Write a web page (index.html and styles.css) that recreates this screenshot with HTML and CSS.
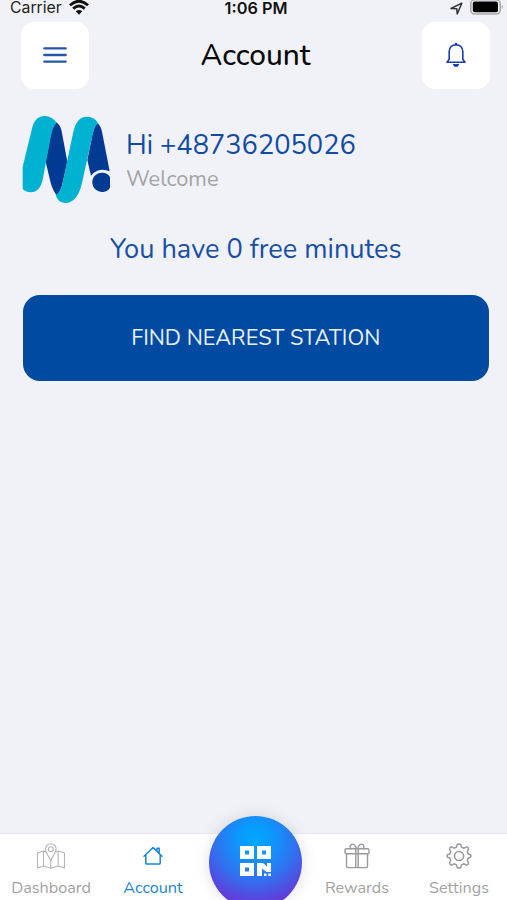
FILE: index.html
```
<!DOCTYPE html>
<html lang="en">
<head>
    <title>Account</title>
    <meta charset="UTF-8">
    <meta name="viewport" content="width=device-width, initial-scale=1.0">
    <link rel="stylesheet" href="styles.css">
</head>
<body>
    <div class="status-bar">
        <div class="carrier">
            <span>Carrier</span>
            <svg width="20" height="15" viewBox="0 0 20 15" fill="none" stroke="#111" stroke-width="2.8">
                <path d="M1 5.2Q10-2.8 19 5.2"/>
                <path d="M4.2 8.6Q10 3.4 15.8 8.6"/>
                <path d="M10 14.8L6.7 11.3Q10 8.5 13.3 11.3Z" fill="#111" stroke="none"/>
            </svg>
        </div>
        <span class="time">1:06 PM</span>
        <div class="indicators">
            <svg width="13" height="13" viewBox="0 0 13 13" fill="none" stroke="#333" stroke-width="1.5" stroke-linejoin="round">
                <path d="M1 6.5L11.8 1.2 7.2 12 6.8 6.8Z"/>
            </svg>
            <svg class="battery" width="34" height="16" viewBox="0 0 34 16">
                <rect x=".8" y=".8" width="29.4" height="14.2" rx="4" fill="#f1f2f8" stroke="#aaa" stroke-width="1.6"/>
                <rect x="2.8" y="2.6" width="25.2" height="10.6" rx="2" fill="#000"/>
                <path d="M31.8 5.5Q34 8 31.8 10.3Z" fill="#aaa"/>
            </svg>
        </div>
    </div>

    <header class="header">
        <button class="square-btn" aria-label="Menu">
            <svg width="24" height="18" viewBox="0 0 24 18" stroke="#2457a5" stroke-width="2.3" stroke-linecap="round">
                <path d="M1.3 2.4h21.4M1.3 9h21.4M1.3 15.7h21.4"/>
            </svg>
        </button>
        <h1>Account</h1>
        <button class="square-btn" aria-label="Notifications">
            <svg width="22" height="26" viewBox="0 0 22 26" fill="none" stroke="#1a3da8" stroke-width="1.6" stroke-linejoin="round">
                <path d="M2 20.2L4.2 17.2V9.5C4.2 5.5 7 2.9 11 2.9S17.8 5.5 17.8 9.5V17.2L20 20.2Z"/>
                <path d="M11 .8V3" stroke-width="2.2"/>
                <path d="M7.8 22H14.2Q13.4 25 11 25T7.8 22Z" fill="#1a3da8" stroke="none"/>
            </svg>
        </button>
    </header>

    <main>
        <section class="profile">
            <svg class="logo" width="88" height="89" viewBox="36 30 264 267">
                <path fill="#003a93" d="M138 52C152 60 155 75 158 95L172 170 160 225Q152 262 140 271C128 255 122 235 120 225L107 170 122 90Q128 62 138 52Z"/>
                <path fill="#003a93" d="M262 54Q272 62 276 80L299 199Q280 190 262 197 250 201 243 212L232 165 247 90Q252 65 262 54Z"/>
                <path fill="#00b2d2" d="M38 185L65 75Q73 33 104 33 128 34 140 54 129 63 123 92L108 170 99 220Q91 262 62 262 46 261 38 252Z"/>
                <path fill="#00b2d2" d="M190 80Q201 34 231 35 255 36 264 55 252 64 247 92L218 225Q205 294 165 294 143 292 137 270 153 263 160 225L171 170Z"/>
                <path fill="#003a93" d="M300 216A29 29 0 1 0 300 248Z"/>
            </svg>
            <div>
                <p class="greeting">Hi +48736205026</p>
                <p class="welcome">Welcome</p>
            </div>
        </section>
        <p class="minutes">You have 0 free minutes</p>
        <button class="find-btn"><span>FIND NEAREST STATION</span></button>
    </main>

    <nav class="tabs">
        <a class="tab">
            <svg width="30" height="28" viewBox="0 0 30 28" fill="none" stroke="#b5b5b5" stroke-width="1.1" stroke-linejoin="round">
                <path d="M10 10L7.5 9 1.5 11V26L7.5 24 14.8 26.2 22.2 24 28.5 26V11L22.2 9 20 10M7.5 9V24M22.2 9V24M14.8 18.5V26"/>
                <path d="M14.8 18.5C13 14.5 9.5 10.5 9.5 7A5.3 5.3 0 0 1 20.1 7C20.1 10.5 16.5 14.5 14.8 18.5Z"/>
                <circle cx="14.8" cy="7.2" r="2.4"/>
            </svg>
            <span>Dashboard</span>
        </a>
        <a class="tab active">
            <svg width="22" height="28" viewBox="0 0 22 28" fill="none" stroke="#1785d6" stroke-width="1.5" stroke-linejoin="round" stroke-linecap="round">
                <path d="M2 14.3L11 5.5 20 14.3M3.8 12.8V21.2Q3.8 22 4.6 22H17.4Q18.2 22 18.2 21.2V12.8M15 9V6.3H17.2V11.2"/>
            </svg>
            <span>Account</span>
        </a>
        <div class="scan-slot">
            <button class="scan-btn" aria-label="Scan code">
                <svg width="31" height="31" viewBox="0 0 31 31" fill="#fff" fill-rule="evenodd">
                    <path d="M0 0H14V13H0ZM5 4.5V8.5H9V4.5ZM17 0H31V13H17ZM22 4.5V8.5H26V4.5ZM0 17H14V30H0ZM5 21.5V25.5H9V21.5Z"/>
                    <path d="M17 17H23L27 20.5V17H31V26H26.5L22 22.5V30H17ZM24 27.5H26.5V30H24ZM28.3 27.5H31V30H28.3Z"/>
                </svg>
            </button>
        </div>
        <a class="tab">
            <svg width="26" height="28" viewBox="0 0 26 28" fill="none" stroke="#999" stroke-width="1.4" stroke-linejoin="round">
                <rect x="1" y="6.7" width="24" height="5" rx="1.3"/>
                <path d="M2.5 11.7V24Q2.5 25.6 4 25.6H22Q23.5 25.6 23.5 24V11.7M11.8 6.7V25.6M14.2 6.7V25.6M12.5 6.7C11.5 3.5 9.5 1.6 7.6 2.3 5.5 3.1 5.7 6.2 7 6.7M13.5 6.7C14.5 3.5 16.5 1.6 18.4 2.3 20.5 3.1 20.3 6.2 19 6.7"/>
            </svg>
            <span>Rewards</span>
        </a>
        <a class="tab">
            <svg width="26" height="28" viewBox="0 0 26 28" fill="none" stroke="#999" stroke-width="1.5" stroke-linejoin="round">
                <path d="M11.2 2.5Q13 1.5 14.8 2.5L15.5 5.1 18 6.2 20.7 4.8Q22.3 5.2 22.5 7L21.3 9.5 22.2 12 24.5 12.7Q25.4 14 24.5 15.3L22.2 16 21.3 18.5 22.5 21Q22.3 22.8 20.7 23.2L18 21.8 15.5 22.9 14.8 25.5Q13 26.5 11.2 25.5L10.5 22.9 8 21.8 5.3 23.2Q3.7 22.8 3.5 21L4.7 18.5 3.8 16 1.5 15.3Q.6 14 1.5 12.7L3.8 12 4.7 9.5 3.5 7Q3.7 5.2 5.3 4.8L8 6.2 10.5 5.1Z"/>
                <circle cx="13" cy="14" r="4.5"/>
            </svg>
            <span>Settings</span>
        </a>
    </nav>
</body>
</html>
```

FILE: styles.css
```
* {
    box-sizing: border-box;
}
body {
    margin: 0;
    height: 100vh;
    display: flex;
    flex-direction: column;
    overflow: hidden;
    background: #f1f2f8;
    font-family: Nunito, 'Noto Sans', sans-serif;
}
h1, p {
    margin: 0;
    font-weight: 400;
    white-space: nowrap;
}
button {
    border: none;
    padding: 0;
    font-family: inherit;
    cursor: pointer;
}
svg {
    display: block;
    flex: none;
}
.status-bar {
    display: grid;
    grid-template-columns: 1fr auto 1fr;
    align-items: center;
    height: 16px;
    padding: 0 5px 0 10px;
    font-family: Inter, sans-serif;
    font-size: 15.8px;
    line-height: 16px;
    color: #222;
}
.carrier {
    display: flex;
    align-items: center;
    gap: 7px;
}
.carrier svg {
    margin-top: -2px;
}
.time {
    font-weight: 600;
    font-size: 16.3px;
    color: #111;
}
.indicators {
    display: flex;
    justify-content: flex-end;
    align-items: center;
    gap: 7px;
}
.battery {
    margin: -2px -2px 0 0;
}
.header {
    display: flex;
    justify-content: space-between;
    align-items: center;
    padding: 5.5px 17px 0 21px;
}
.header h1 {
    padding-top: 2px;
    font-size: 29.8px;
    font-weight: 500;
    line-height: 40px;
    color: #0a0a0a;
}
.square-btn {
    display: flex;
    justify-content: center;
    align-items: center;
    width: 68px;
    height: 67.5px;
    border-radius: 13px;
    background: #fff;
}
main {
    flex: 1;
    padding: 26px 18px 0 22.5px;
}
.profile {
    display: flex;
    gap: 16px;
}
.logo {
    margin-left: -0.5px;
}
.greeting {
    padding-top: 12px;
    font-size: 27.2px;
    line-height: 38px;
    color: #114ba2;
}
.welcome {
    margin-top: -1px;
    font-size: 21.7px;
    line-height: 30px;
    color: #a3a3a6;
}
.minutes {
    margin-top: 27px;
    text-align: center;
    font-size: 27.2px;
    line-height: 38px;
    color: #174fa3;
}
.find-btn {
    display: block;
    width: 100%;
    height: 86.5px;
    margin-top: 25.5px;
    border-radius: 17px;
    background: #004aa1;
    color: #e8f0ff;
    font-size: 21.8px;
}
.tabs {
    display: grid;
    grid-template-columns: repeat(5, 102px);
    height: 67px;
    border-top: 1px solid #e9eaee;
    background: #fff;
}
.tab {
    display: flex;
    flex-direction: column;
    align-items: center;
    padding-top: 8px;
    font-size: 16.2px;
    line-height: 22px;
    color: #a3a3a3;
}
.tab span {
    margin-top: 7px;
    white-space: nowrap;
}
.tab.active {
    color: #1785d6;
}
.scan-slot {
    display: flex;
    justify-content: center;
}
.scan-btn {
    display: flex;
    justify-content: center;
    align-items: center;
    flex: none;
    width: 93px;
    height: 93px;
    margin-top: -18px;
    padding-bottom: 3px;
    border-radius: 50%;
    background: radial-gradient(circle at 50% 25%, #00a8ff 0, #0b98ff 20%, #336fee 50%, #5b43dc 73%, #6a2fd0 88%);
    box-shadow: 0 0 16px rgba(0, 0, 0, 0.13);
}
```
